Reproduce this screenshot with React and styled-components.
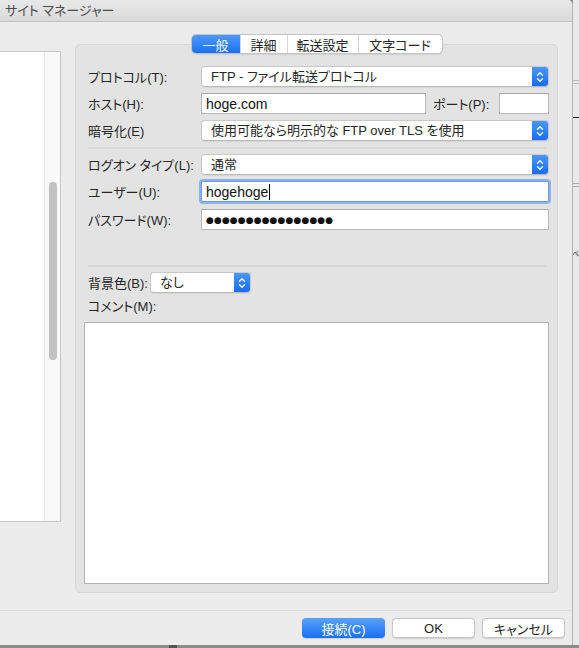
import React from 'react';
import styled, { createGlobalStyle } from 'styled-components';

const Global = createGlobalStyle`
  body {
    margin: 0;
    background: #8e8e8e;
    font-family: "Liberation Sans", "Noto Sans CJK JP", sans-serif;
    font-feature-settings: "palt";
    color: #262626;
  }
`;

function Chevrons() {
  return (
    <svg width="8" height="12" viewBox="0 0 8 12" fill="none" stroke="#fff" strokeWidth="1.3" strokeLinecap="round" strokeLinejoin="round">
      <path d="M1.5 4.2 L4 1.7 L6.5 4.2" />
      <path d="M1.5 7.8 L4 10.3 L6.5 7.8" />
    </svg>
  );
}

function Select({ value }) {
  return (
    <SelectBox>
      <SelectText>{value}</SelectText>
      <SelectArrow>
        <Chevrons />
      </SelectArrow>
    </SelectBox>
  );
}

const tabs = [
  { label: '一般', w: 48, active: true },
  { label: '詳細', w: 47 },
  { label: '転送設定', w: 71 },
  { label: '文字コード', w: 84 },
];

export default function App() {
  return (
    <>
      <Global />
      <Page>
        <Top>
          <Window>
            <TitleBar>サイト マネージャー</TitleBar>
            <Main>
              <SiteList>
                <ScrollTrack>
                  <Thumb />
                </ScrollTrack>
              </SiteList>
              <RightCol>
                <Tabs>
                  {tabs.map((t, i) => (
                    <Tab key={t.label} $w={t.w} $active={t.active} $first={i === 0}>
                      {t.label}
                    </Tab>
                  ))}
                </Tabs>
                <Panel>
                  <Row>
                    <Label>プロトコル(T):</Label>
                    <Select value="FTP - ファイル転送プロトコル" />
                  </Row>
                  <HostRow $mt={6}>
                    <Label>ホスト(H):</Label>
                    <Input>hoge.com</Input>
                    <PortLabel>ポート(P):</PortLabel>
                    <Input />
                  </HostRow>
                  <Row $mt={6}>
                    <Label>暗号化(E)</Label>
                    <Select value="使用可能なら明示的な FTP over TLS を使用" />
                  </Row>
                  <Separator $mt={6} />
                  <Row $mt={5}>
                    <Label>ログオン タイプ(L):</Label>
                    <Select value="通常" />
                  </Row>
                  <Row $mt={6}>
                    <Label>ユーザー(U):</Label>
                    <Input $focus>
                      hogehoge
                      <Caret />
                    </Input>
                  </Row>
                  <Row $mt={7}>
                    <Label>パスワード(W):</Label>
                    <Input>
                      <Dots>●●●●●●●●●●●●●●●●</Dots>
                    </Input>
                  </Row>
                  <Separator $mt={35} />
                  <BgRow $mt={5}>
                    <Label>背景色(B):</Label>
                    <Select value="なし" />
                  </BgRow>
                  <CommentLabel>コメント(M):</CommentLabel>
                  <Comment />
                </Panel>
              </RightCol>
            </Main>
            <Footer>
              <Button $primary>接続(C)</Button>
              <Button>OK</Button>
              <Button>キャンセル</Button>
            </Footer>
          </Window>
          <Behind>
            <BehindText>ペ</BehindText>
          </Behind>
        </Top>
        <Bottom>
          <BottomMark />
        </Bottom>
      </Page>
    </>
  );
}

const Page = styled.div`
  width: 579px;
  height: 648px;
  display: flex;
  flex-direction: column;
  overflow: hidden;
`;

const Top = styled.div`
  display: flex;
  height: 645px;
`;

const Window = styled.div`
  width: 573px;
  box-sizing: border-box;
  display: flex;
  flex-direction: column;
  background: #ececec;
  border-right: 1px solid #b4b4b4;
  border-top-right-radius: 5px;
  overflow: hidden;
`;

const TitleBar = styled.div`
  height: 22px;
  box-sizing: border-box;
  padding-left: 5px;
  line-height: 21px;
  font-size: 13px;
  color: #4d4d4d;
  background: linear-gradient(#e8e8e8, #dadada);
  border-bottom: 1px solid #c2c2c2;
`;

const Main = styled.div`
  height: 588px;
  display: flex;
  gap: 14px;
`;

const SiteList = styled.div`
  margin-top: 29px;
  width: 61px;
  height: 471px;
  box-sizing: border-box;
  background: #fff;
  border-top: 1px solid #c6c6c6;
  border-right: 1px solid #c6c6c6;
  border-bottom: 1px solid #c6c6c6;
  display: flex;
  justify-content: flex-end;
`;

const ScrollTrack = styled.div`
  width: 15px;
  background: #f9f9f9;
  border-left: 1px solid #e6e6e6;
  padding-top: 130px;
  display: flex;
  justify-content: center;
`;

const Thumb = styled.div`
  width: 8px;
  height: 178px;
  border-radius: 4px;
  background: #c2c2c2;
`;

const RightCol = styled.div`
  width: 483px;
  padding-top: 12px;
  display: flex;
  flex-direction: column;
  align-items: center;
`;

const Tabs = styled.div`
  position: relative;
  z-index: 1;
  display: flex;
  height: 20px;
  box-sizing: border-box;
  border: 1px solid #c4c4c4;
  border-radius: 5px;
  background: #fff;
  overflow: hidden;
  box-shadow: 0 0.5px 1px rgba(0, 0, 0, 0.08);
`;

const Tab = styled.div`
  width: ${p => p.$w}px;
  box-sizing: border-box;
  display: flex;
  align-items: center;
  justify-content: center;
  font-size: 13px;
  color: ${p => (p.$active ? '#fff' : '#262626')};
  background: ${p => (p.$active ? 'linear-gradient(#4b9bfb, #1c6ff2)' : 'transparent')};
  border-left: ${p => (p.$first ? 'none' : '1px solid #d6d6d6')};
`;

const Panel = styled.div`
  margin-top: -10px;
  width: 483px;
  height: 549px;
  box-sizing: border-box;
  background: #e3e3e3;
  border: 1px solid #d8d8d8;
  border-radius: 5px;
  padding: 21px 8px 0 12px;
  display: flex;
  flex-direction: column;
`;

const Row = styled.div`
  display: grid;
  grid-template-columns: 113px 1fr;
  align-items: center;
  height: 21px;
  margin-top: ${p => p.$mt || 0}px;
`;

const HostRow = styled(Row)`
  grid-template-columns: 113px 225px 73px 50px;
`;

const BgRow = styled(Row)`
  grid-template-columns: 62px 101px;
`;

const Label = styled.div`
  font-size: 13px;
  white-space: nowrap;
`;

const PortLabel = styled(Label)`
  padding-left: 7px;
`;

const SelectBox = styled.div`
  height: 21px;
  box-sizing: border-box;
  display: flex;
  align-items: stretch;
  background: #fff;
  border: 1px solid #c9c9c9;
  border-bottom-color: #b9b9b9;
  border-radius: 4px;
  overflow: hidden;
  box-shadow: 0 0.5px 1px rgba(0, 0, 0, 0.06);
`;

const SelectText = styled.div`
  flex: 1;
  padding-left: 9px;
  font-size: 13px;
  line-height: 19px;
  white-space: nowrap;
  overflow: hidden;
`;

const SelectArrow = styled.div`
  width: 16px;
  display: flex;
  align-items: center;
  justify-content: center;
  background: linear-gradient(#4a98fa, #1a6cf1);
`;

const Input = styled.div`
  height: 21px;
  box-sizing: border-box;
  display: flex;
  align-items: center;
  padding-left: 4px;
  font-size: 14px;
  background: #fff;
  border: 1px solid ${p => (p.$focus ? '#6b9ae4' : '#b8b8b8')};
  border-top-color: ${p => (p.$focus ? '#6b9ae4' : '#a9a9a9')};
  border-radius: ${p => (p.$focus ? '2px' : '0')};
  box-shadow: ${p => (p.$focus ? '0 0 0 2px rgba(90, 145, 228, 0.6)' : 'none')};
  color: #111;
`;

const Caret = styled.span`
  width: 1px;
  height: 16px;
  background: #000;
  margin-left: 1px;
`;

const Dots = styled.span`
  font-family: "DejaVu Sans", sans-serif;
  font-size: 9px;
  letter-spacing: 0.1px;
  color: #111;
`;

const Separator = styled.div`
  height: 2px;
  width: 459px;
  background: #d8d8d8;
  margin-top: ${p => p.$mt}px;
`;

const CommentLabel = styled(Label)`
  margin-top: 6px;
  line-height: 16px;
`;

const Comment = styled.div`
  margin-top: 7px;
  margin-left: -4px;
  width: 465px;
  height: 262px;
  box-sizing: border-box;
  background: #fff;
  border: 1px solid #b3b3b3;
`;

const Footer = styled.div`
  height: 35px;
  box-sizing: border-box;
  border-top: 1px solid #dedede;
  padding: 7px 7px 0 0;
  display: flex;
  justify-content: flex-end;
  gap: 7px;
`;

const Button = styled.div`
  width: 83px;
  height: 20px;
  box-sizing: border-box;
  display: flex;
  align-items: center;
  justify-content: center;
  font-size: 13px;
  border-radius: 4px;
  color: ${p => (p.$primary ? '#fff' : '#262626')};
  background: ${p => (p.$primary ? 'linear-gradient(#5ba2fb, #1b6ff2)' : '#fff')};
  border: ${p => (p.$primary ? 'none' : '1px solid #c8c8c8')};
  box-shadow: 0 0.5px 1px rgba(0, 0, 0, 0.12);
`;

const Behind = styled.div`
  flex: 1;
  position: relative;
  overflow: hidden;
  background:
    linear-gradient(#b9b9b9, #b9b9b9) 0 80px / 100% 1px no-repeat,
    linear-gradient(#b9b9b9, #b9b9b9) 0 83px / 100% 1px no-repeat,
    linear-gradient(#1e1e1e, #1e1e1e) 0 117px / 100% 1px no-repeat,
    linear-gradient(#a8a8a8, #a8a8a8) 0 183px / 100% 1px no-repeat,
    linear-gradient(#a8a8a8, #a8a8a8) 0 186px / 100% 1px no-repeat,
    #e9e9e9;
`;

const BehindText = styled.span`
  position: absolute;
  left: -1px;
  top: 248px;
  font-size: 7px;
  color: #333;
  white-space: nowrap;
`;

const Bottom = styled.div`
  height: 3px;
  background: #8c8c8c;
  position: relative;
`;

const BottomMark = styled.div`
  position: absolute;
  left: 169px;
  width: 8px;
  height: 3px;
  background: #555;
`;
